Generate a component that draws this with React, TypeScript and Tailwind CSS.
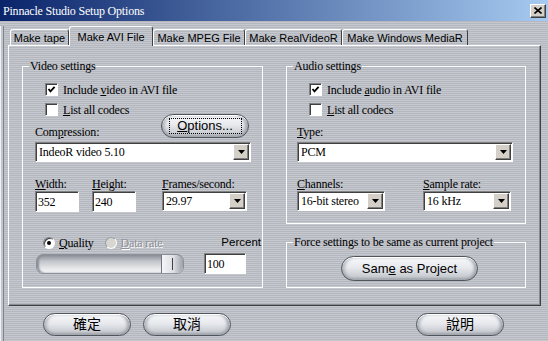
import type { ReactNode } from "react";

const stripes =
  "bg-[image:repeating-linear-gradient(to_bottom,#c5c8ce_0px,#c5c8ce_1px,#b4b7be_1px,#b4b7be_2px)] bg-fixed";
const serif = "font-['Liberation_Serif',serif] text-[12px] leading-[14px] tracking-[-0.2px] text-black";
const sans = "font-['Liberation_Sans',Arial,sans-serif]";
const cjk = "font-['Liberation_Sans','Noto_Sans_CJK_TC',sans-serif]";
const sunken =
  "bg-white border border-t-[#808080] border-l-[#808080] border-r-white border-b-white shadow-[inset_1px_1px_0_#404040]";
const raised =
  "bg-[#d4d0c8] border border-t-white border-l-white border-r-[#404040] border-b-[#404040] shadow-[inset_-1px_-1px_0_#808080]";
const pill =
  "flex items-center justify-center rounded-full border border-[#50545c] bg-[image:linear-gradient(to_bottom,#f7f8fa,#e7e9ed_45%,#bcc0c6)] shadow-[inset_0_1px_0_#ffffff,inset_0_-2px_2px_#a3a7ae,inset_3px_0_3px_#b8bcc3,inset_-3px_0_3px_#a8acb3]";

const Check = ({ checked, children, className = "" }: { checked?: boolean; children: ReactNode; className?: string }) => (
  <div className={`flex items-center ml-[22px] h-[13px] ${className}`}>
    <div className={`${sunken} w-[13px] h-[13px] flex items-center justify-center shrink-0`}>
      {checked && (
        <svg width="9" height="9" viewBox="0 0 9 9">
          <path d="M1.5 4 L3.5 6.3 L7.6 1.8" fill="none" stroke="#000" strokeWidth="1.8" />
        </svg>
      )}
    </div>
    <span className={`${serif} ml-[5px] whitespace-nowrap`}>{children}</span>
  </div>
);

const Select = ({ className, value }: { className: string; value: string }) => (
  <div className={`${sunken} ${className} h-[20px] flex items-center`}>
    <span className={`${serif} flex-1 pl-[3px] whitespace-nowrap`}>{value}</span>
    <div className={`${raised} w-[16px] h-[16px] mr-[1px] flex items-center justify-center`}>
      <svg width="7" height="4" viewBox="0 0 7 4">
        <path d="M0 0h7L3.5 4z" fill="#000" />
      </svg>
    </div>
  </div>
);

const Field = ({ className, value }: { className: string; value: string }) => (
  <div className={`${sunken} ${className} h-[21px] flex items-center pl-[2px] ${serif}`}>{value}</div>
);

const Tab = ({ className, children }: { className: string; children: ReactNode }) => (
  <div
    className={`${stripes} ${className} h-[16px] mb-[1px] pt-[2px] flex items-center justify-center border-t border-l border-r border-t-white border-l-white border-r-[#404040] rounded-t-[3px] text-[11px] text-black whitespace-nowrap`}
  >
    {children}
  </div>
);

export default function App() {
  return (
    <div className={`w-[548px] h-[341px] overflow-hidden ${stripes} ${sans}`}>
      {/* title bar */}
      <div className="h-[21px] flex items-center justify-between pl-[3px] pr-[2px] bg-[image:linear-gradient(to_right,#0a246a,#a6caf0)]">
        <span className="font-['Liberation_Serif',serif] text-[12px] tracking-[-0.2px] text-white">
          Pinnacle Studio Setup Options
        </span>
        <div className={`${raised} w-[16px] h-[14px] flex items-center justify-center`}>
          <svg width="8" height="7" viewBox="0 0 8 7">
            <path d="M0.5 0.5 L7.5 6.5 M7.5 0.5 L0.5 6.5" stroke="#000" strokeWidth="1.6" />
          </svg>
        </div>
      </div>

      <div className="h-[320px] shadow-[inset_1px_0_0_#eef0f2,inset_3px_0_0_#c3c6cc,inset_4px_0_0_#7e828a]">
        {/* tabs */}
        <div className="relative z-10 flex items-end h-[20px] mt-[5px] ml-[10px]">
          <Tab className="w-[59px]">Make tape</Tab>
          <div
            className={`${stripes} w-[84px] h-[20px] pt-[1px] flex items-center justify-center border-t border-l border-r border-t-white border-l-white border-r-[#404040] rounded-t-[3px] text-[11px] text-black`}
          >
            Make AVI File
          </div>
          <Tab className="w-[92px]">Make MPEG File</Tab>
          <Tab className="w-[97px]">Make RealVideoR</Tab>
          <Tab className="w-[126px]">Make Windows MediaR</Tab>
        </div>

        {/* panel */}
        <div className="-mt-[1px] ml-[8px] w-[533px] h-[261px] border border-t-white border-l-white border-r-[#404040] border-b-[#404040] shadow-[inset_-1px_-1px_0_#8a8d93] flex pl-[13px] pt-[13px] gap-[23px]">
          {/* Video settings */}
          <fieldset className="w-[241px] h-[229px] border border-white">
            <legend className={`${serif} ml-[6px] px-[1px]`}>Video settings</legend>
            <Check checked className="mt-[10px]">
              Include <u>v</u>ideo in AVI file
            </Check>
            <div className="flex mt-[7px]">
              <div className="flex flex-col">
                <Check>
                  <u>L</u>ist all codecs
                </Check>
                <span className={`${serif} mt-[9px] ml-[12px]`}>
                  Com<u>p</u>ression:
                </span>
              </div>
              <div className={`${pill} ml-auto mr-[13px] mt-[11px] w-[88px] h-[24px]`}>
                <div className="w-[73px] h-[16px] border border-dotted border-black flex items-center justify-center text-[13px] text-black">
                  <u>O</u>ptions...
                </div>
              </div>
            </div>
            <Select className="mt-[3px] ml-[12px] w-[216px]" value="IndeoR video 5.10" />
            <div className="flex mt-[15px]">
              <div className="flex flex-col ml-[12px]">
                <span className={serif}>
                  <u>W</u>idth:
                </span>
                <Field className="w-[44px]" value="352" />
              </div>
              <div className="flex flex-col ml-[13px]">
                <span className={serif}>
                  <u>H</u>eight:
                </span>
                <Field className="w-[44px]" value="240" />
              </div>
              <div className="flex flex-col ml-[26px]">
                <span className={serif}>
                  <u>F</u>rames/second:
                </span>
                <Select className="w-[85px]" value="29.97" />
              </div>
            </div>
            <div className="flex items-center mt-[24px] h-[14px]">
              <div className="ml-[20px] w-[12px] h-[12px] rounded-full bg-white border border-t-[#808080] border-l-[#808080] border-r-white border-b-white shadow-[inset_1px_1px_0_#404040] flex items-center justify-center">
                <div className="w-[4px] h-[4px] rounded-full bg-black" />
              </div>
              <span className={`${serif} ml-[4px]`}>
                <u>Q</u>uality
              </span>
              <div className="ml-[11px] w-[12px] h-[12px] rounded-full bg-[#d8d6d0] border border-t-[#9a9ca2] border-l-[#9a9ca2] border-r-white border-b-white" />
              <span className="font-['Liberation_Serif',serif] text-[12px] leading-[14px] tracking-[-0.2px] ml-[4px] text-[#8d9096] [text-shadow:1px_1px_0_#ffffff]">
                <u>D</u>ata rate
              </span>
              <span className="ml-auto mr-[1px] text-[11.5px] text-black">Percent</span>
            </div>
            <div className="flex items-center mt-[3px]">
              <div className="ml-[13px] w-[148px] h-[20px] rounded-[7px] border border-[#8c9098] bg-[image:linear-gradient(to_bottom,#8a8e96,#c3c6cb_35%,#e6e8ea_75%,#f6f7f8)] shadow-[inset_2px_0_2px_#8a8e96] flex justify-end overflow-hidden">
                <div className="w-[22px] h-full rounded-r-[6px] border-l border-[#70747c] bg-[image:linear-gradient(to_right,#f4f5f7,#dcdee2_55%,#9da1a8)] flex items-center justify-center">
                  <div className="w-[1px] h-[12px] bg-[#3c4048]" />
                </div>
              </div>
              <Field className="ml-[20px] w-[42px]" value="100" />
            </div>
          </fieldset>

          {/* right column */}
          <div className="flex flex-col w-[240px]">
            <fieldset className="w-[240px] h-[165px] border border-white">
              <legend className={`${serif} ml-[6px] px-[1px]`}>Audio settings</legend>
              <Check checked className="mt-[10px]">
                Include <u>a</u>udio in AVI file
              </Check>
              <Check className="mt-[7px]">
                <u>L</u>ist all codecs
              </Check>
              <span className={`${serif} block mt-[9px] ml-[10px]`}>
                <u>T</u>ype:
              </span>
              <Select className="mt-[3px] ml-[10px] w-[216px]" value="PCM" />
              <div className="flex mt-[15px]">
                <div className="flex flex-col ml-[10px]">
                  <span className={serif}>
                    <u>C</u>hannels:
                  </span>
                  <Select className="w-[88px]" value="16-bit stereo" />
                </div>
                <div className="flex flex-col ml-[38px]">
                  <span className={serif}>
                    <u>S</u>ample rate:
                  </span>
                  <Select className="w-[88px]" value="16 kHz" />
                </div>
              </div>
            </fieldset>
            <fieldset className="mt-[11px] w-[240px] h-[53px] border border-white">
              <legend className={`${serif} ml-[6px] px-[1px]`}>Force settings to be same as current project</legend>
              <div className={`${pill} mt-[7px] ml-[54px] w-[137px] h-[25px] text-[13px] text-black`}>
                Sam<u>e</u>&nbsp;as Project
              </div>
            </fieldset>
          </div>
        </div>

        {/* bottom buttons */}
        <div className={`flex mt-[7px] ml-[43px] ${cjk}`}>
          <div className={`${pill} w-[88px] h-[23px] text-[14px] text-black`}>確定</div>
          <div className={`${pill} ml-[12px] w-[88px] h-[23px] text-[14px] text-black`}>取消</div>
          <div className={`${pill} ml-[185px] w-[88px] h-[23px] text-[14px] text-black`}>說明</div>
        </div>
      </div>
    </div>
  );
}
